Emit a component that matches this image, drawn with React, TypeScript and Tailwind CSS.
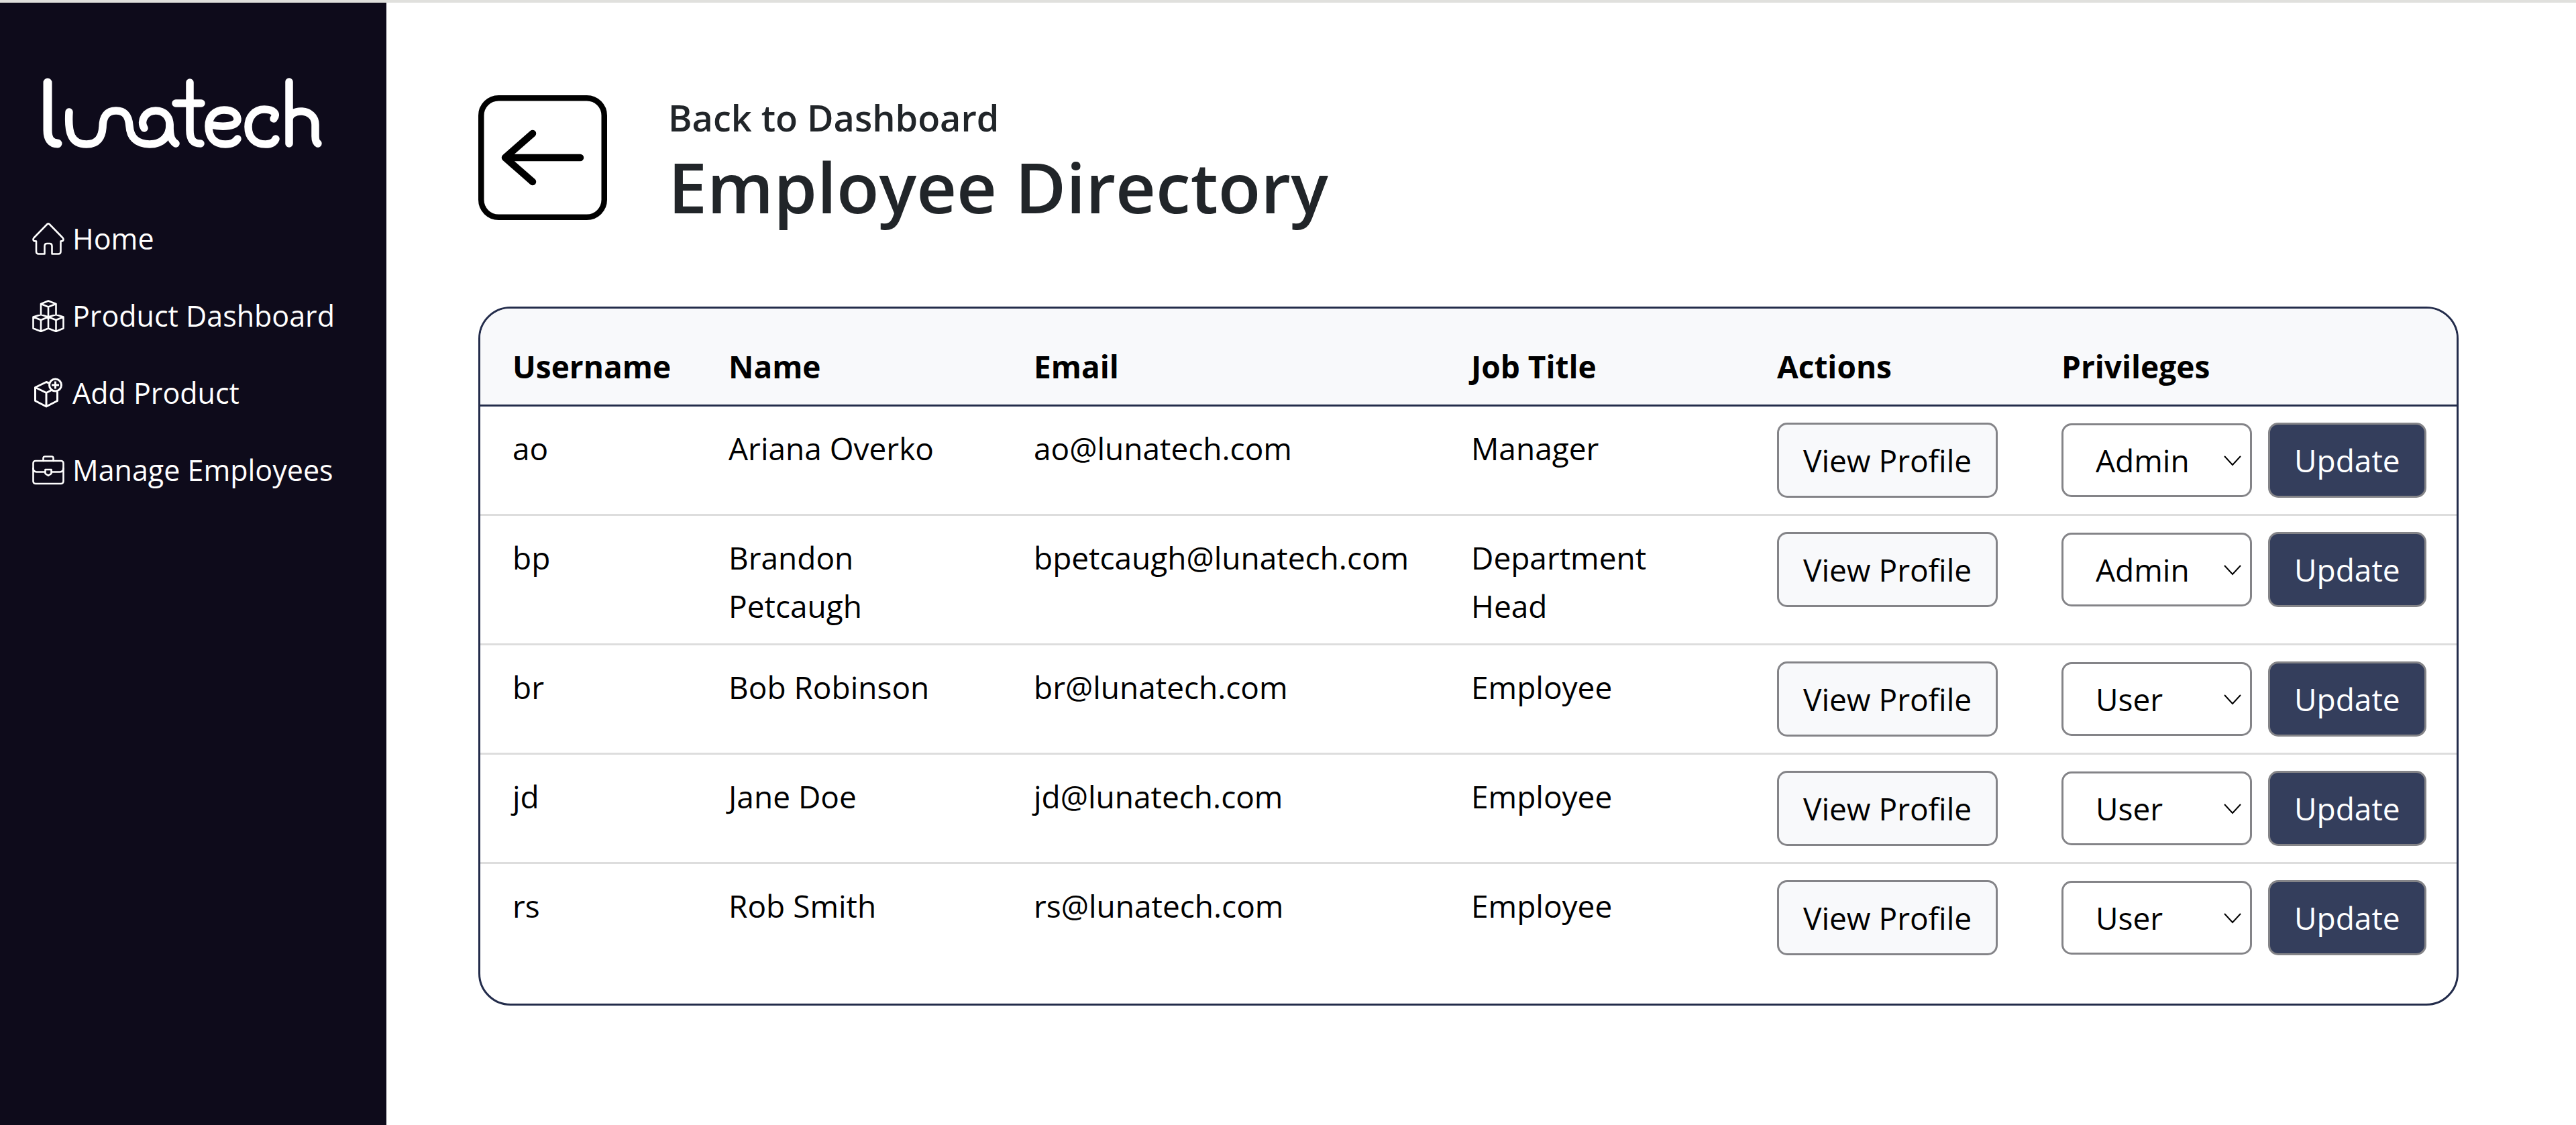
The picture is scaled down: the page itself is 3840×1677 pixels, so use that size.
import { useState } from "react";

type Employee = {
  username: string;
  name: string;
  email: string;
  title: string;
  privilege: "Admin" | "User";
};

const employees: Employee[] = [
  { username: "ao", name: "Ariana Overko", email: "ao@lunatech.com", title: "Manager", privilege: "Admin" },
  { username: "bp", name: "Brandon Petcaugh", email: "bpetcaugh@lunatech.com", title: "Department Head", privilege: "Admin" },
  { username: "br", name: "Bob Robinson", email: "br@lunatech.com", title: "Employee", privilege: "User" },
  { username: "jd", name: "Jane Doe", email: "jd@lunatech.com", title: "Employee", privilege: "User" },
  { username: "rs", name: "Rob Smith", email: "rs@lunatech.com", title: "Employee", privilege: "User" },
];

const columns = [
  { label: "Username", width: "w-[322px]" },
  { label: "Name", width: "w-[455px]" },
  { label: "Email", width: "w-[652px]" },
  { label: "Job Title", width: "w-[456px]" },
  { label: "Actions", width: "w-[424px]" },
  { label: "Privileges", width: "" },
];

function Logo() {
  return (
    <svg viewBox="0 0 420 106" className="w-[420px] h-[106px]" role="img" aria-label="lunatech" fill="none" stroke="white" strokeWidth="11.5" strokeLinecap="round" strokeLinejoin="round">
      <path d="M7 7V78C7 91 12 98 22 98" strokeWidth="13" />
      <path d="M39 51C37 82 42 99 65 99C82 99 88 88 89 74C89 57 96 49 109 49C123 49 128 58 129 72C130 88 139 99 159 99C178 99 189 87 189 70C189 58 181 49 168 49C153 49 144 64 151 75" />
      <path d="M189 70C189 89 192 94 198 98" />
      <path d="M219 7V78C219 92 224 98 235 98M198 38H236" />
      <path d="M250 70C268 74 291 73 290 61C289 53 282 48 270 48C256 48 247 58 247 72C247 89 256 99 272 99C281 99 287 96 290 91" />
      <path d="M344 61C350 54 344 47 330 47C315 47 306 59 306 73C306 89 316 99 332 99C340 99 345 96 347 91" />
      <path d="M367 6V98M367 63C367 45 406 44 406 70V87C406 94 408 97 410 98" />
    </svg>
  );
}

const iconProps = {
  viewBox: "0 0 48 48",
  className: "w-12 h-12",
  fill: "none",
  stroke: "currentColor",
  strokeWidth: 3,
  strokeLinecap: "round" as const,
  strokeLinejoin: "round" as const,
  "aria-hidden": true,
};

function HomeIcon() {
  return (
    <svg {...iconProps} strokeWidth={2.6}>
      <path d="M22.500 2Q24 0.800 25.500 2L45.500 22.500Q47.500 25 45.500 27Q44.500 27.500 42.500 27.500V43Q42.500 46.500 39 46.500H29.500V35Q29.500 31 26 31H22Q18.500 31 18.500 35V46.500H9.500Q6 46.500 6 43V27.500Q3.500 27.500 2.500 27Q0.500 25 2.500 22.500Z" />
    </svg>
  );
}

function BoxesIcon() {
  return (
    <svg {...iconProps} strokeWidth={2.6}>
      <path d="M24 1.500L35.500 6L24 10.500L13 6ZM13 6V22M24 10.500V25M35.500 6V22M13 22L24 25.500L13 30L1.500 25.500ZM35.500 22L46.500 25.500L35.500 30L24 25.500ZM1.500 25.500V42.500L13 47L24 42.500L35.500 47L46.500 42.500V25.500M24 25.500V42.500M13 30V47M35.500 30V47" />
    </svg>
  );
}

function AddBoxIcon() {
  return (
    <svg {...iconProps} strokeLinecap="butt">
      <path d="M25 9L21 7.500L4.500 15.500V35.500L21 44L37.500 35.500V22M4.500 15.500L21 23.500L29 19.500M21 23.500V44" />
      <circle cx="34.500" cy="12" r="9" />
      <path d="M34.500 6.500V17.500M29 12H40" />
    </svg>
  );
}

function BriefcaseIcon() {
  return (
    <svg {...iconProps} strokeWidth={2.6}>
      <rect x="1.500" y="10" width="45" height="34" rx="3.500" />
      <path d="M16.500 10V6Q16.500 3.500 19 3.500H29Q31.500 3.500 31.500 6V10M1.500 21Q1.500 26 6.500 26.500H19M29 26.500H41.500Q46.500 26 46.500 21M19.500 23H28.500V29L24 32L19.500 29Z" />
    </svg>
  );
}

const navigation = [
  { label: "Home", Icon: HomeIcon },
  { label: "Product Dashboard", Icon: BoxesIcon },
  { label: "Add Product", Icon: AddBoxIcon },
  { label: "Manage Employees", Icon: BriefcaseIcon },
];

function EmployeeRow({ employee }: { employee: Employee }) {
  const [privilege, setPrivilege] = useState<string>(employee.privilege);
  return (
    <tr className="border-b-3 border-[#dddddd] align-top last:border-b-0">
      <td className="px-12 pt-[26px] pb-5">{employee.username}</td>
      <td className="px-12 pt-[26px] pb-5">{employee.name}</td>
      <td className="px-12 pt-[26px] pb-5">{employee.email}</td>
      <td className="px-12 pt-[26px] pb-5">{employee.title}</td>
      <td className="px-12 py-6">
        <button type="button" className="block h-28 px-9 whitespace-nowrap rounded-[15px] border-3 border-[#848488] bg-[#f8f9fb]">
          View Profile
        </button>
      </td>
      <td className="px-12 py-6">
        <div className="flex items-center gap-6">
          <div className="relative">
            <select
              aria-label={"Privilege for " + employee.name}
              value={privilege}
              onChange={(e) => setPrivilege(e.target.value)}
              className="block h-[110px] w-[284px] appearance-none rounded-[15px] border-3 border-[#848488] bg-white pl-12"
            >
              <option>Admin</option>
              <option>User</option>
            </select>
            <svg viewBox="0 0 26 16" className="pointer-events-none absolute right-4 top-12 h-4 w-[26px]" fill="none" stroke="black" strokeWidth="2" aria-hidden>
              <path d="M1 1L13 14L25 1" />
            </svg>
          </div>
          <button type="button" className="h-28 px-9 rounded-[15px] border-3 border-[#848488] bg-[#343e5c] text-white">
            Update
          </button>
        </div>
      </td>
    </tr>
  );
}

export default function App() {
  return (
    <div className="flex min-h-screen flex-col bg-white font-['Open_Sans',sans-serif] text-[46px] leading-[72px] text-black">
      <div className="h-1 bg-[#e0e0dd]" />
      <div className="flex grow">
        <aside className="w-[576px] shrink-0 bg-[#0e0b1b] text-white">
          <div className="pt-28 pl-16">
            <Logo />
          </div>
          <nav className="mt-[98px] flex flex-col gap-[43px] pl-12 text-[43px]">
            {navigation.map(({ label, Icon }) => (
              <a key={label} href="#" className="flex items-center gap-3 whitespace-nowrap">
                <Icon />
                {label}
              </a>
            ))}
          </nav>
        </aside>
        <main className="grow pt-[138px] pr-[175px] pl-[137px]">
          <header className="flex items-start gap-[91px]">
            <a href="#" aria-label="Back to Dashboard">
              <svg viewBox="0 0 192 186" className="h-[186px] w-48" fill="none" stroke="black" strokeWidth="8.500" strokeLinecap="round" strokeLinejoin="round" aria-hidden>
                <rect x="4.250" y="4.250" width="183.500" height="177.500" rx="26" />
                <path d="M152 93H41M81 57L40 93L81 129" strokeWidth="10.500" />
              </svg>
            </a>
            <div className="font-semibold text-[#212529]">
              <p className="text-[54px] leading-[66px]">Back to Dashboard</p>
              <h1 className="text-[104px] leading-[140px]">Employee Directory</h1>
            </div>
          </header>
          <div className="mt-[109px] overflow-hidden rounded-[48px] border-3 border-[#232c4b] pb-12">
            <table className="w-full table-fixed border-collapse text-left">
              <thead>
                <tr className="border-b-3 border-[#232c4b] bg-[#f8f9fb]">
                  {columns.map(({ label, width }) => (
                    <th key={label} scope="col" className={"px-12 pt-[50px] pb-[21px] font-bold " + width}>
                      {label}
                    </th>
                  ))}
                </tr>
              </thead>
              <tbody>
                {employees.map((employee) => (
                  <EmployeeRow key={employee.username} employee={employee} />
                ))}
              </tbody>
            </table>
          </div>
        </main>
      </div>
    </div>
  );
}
